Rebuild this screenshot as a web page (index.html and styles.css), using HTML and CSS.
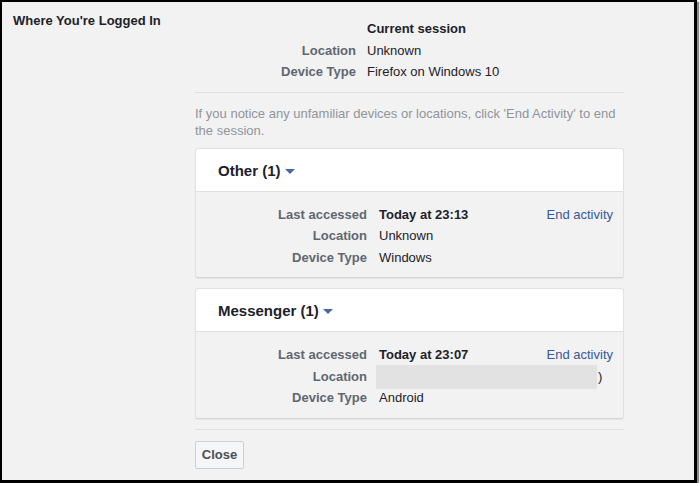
FILE: index.html
```html
<!DOCTYPE html>
<html lang="en">
<head>
<meta charset="utf-8">
<title>Where You're Logged In</title>
<link rel="stylesheet" href="styles.css">
</head>
<body>
<div class="frame">
  <div class="side">
    <h1 class="title">Where You're Logged In</h1>
  </div>
  <div class="main">
    <div class="current">
      <span class="lbl"></span><span class="val strong">Current session</span>
      <span class="lbl">Location</span><span class="val">Unknown</span>
      <span class="lbl">Device Type</span><span class="val">Firefox on Windows 10</span>
    </div>
    <div class="divider"></div>
    <p class="note">If you notice any unfamiliar devices or locations, click 'End Activity' to end the session.</p>

    <div class="card">
      <div class="card-head">
        <span class="card-title">Other (1)</span>
        <span class="caret"></span>
      </div>
      <div class="card-body">
        <span class="lbl">Last accessed</span><span class="val strong">Today at 23:13</span><a class="end" href="#">End activity</a>
        <span class="lbl">Location</span><span class="val">Unknown</span><span></span>
        <span class="lbl">Device Type</span><span class="val">Windows</span><span></span>
      </div>
    </div>

    <div class="card">
      <div class="card-head">
        <span class="card-title">Messenger (1)</span>
        <span class="caret"></span>
      </div>
      <div class="card-body">
        <span class="lbl">Last accessed</span><span class="val strong">Today at 23:07</span><a class="end" href="#">End activity</a>
        <span class="lbl">Location</span><span class="val blurred"><span class="blur"></span>)</span><span></span>
        <span class="lbl">Device Type</span><span class="val">Android</span><span></span>
      </div>
    </div>

    <div class="divider bottom"></div>
    <button class="close" type="button">Close</button>
  </div>
</div>
</body>
</html>
```

FILE: styles.css
```css
html, body {
  margin: 0;
  padding: 0;
  background: #ffffff;
}

.frame {
  box-sizing: border-box;
  width: 697px;
  height: 483px;
  border-style: solid;
  border-color: #000000;
  border-width: 2px 3px 3px 2px;
  background: #f2f2f2;
  box-shadow: 2px 2px 1px #8a8a8a;
  display: flex;
  font-family: "Liberation Sans", Arial, sans-serif;
  font-size: 13px;
  color: #1d2129;
}

.side {
  width: 193px;
  flex: none;
}

.title {
  margin: 0;
  padding: 11px 0 0 11px;
  font-size: 13px;
  line-height: 16px;
  font-weight: bold;
  color: #1d2129;
}

.main {
  width: 429px;
  flex: none;
  padding-top: 16px;
}

.current {
  display: grid;
  grid-template-columns: 161px 1fr;
  column-gap: 11px;
  line-height: 21.5px;
}

.lbl {
  text-align: right;
  font-weight: bold;
  color: #606770;
  white-space: nowrap;
}

.val {
  color: #1d2129;
  white-space: nowrap;
}

.strong {
  font-weight: bold;
}

.divider {
  height: 1px;
  background: #dddfe2;
  margin-top: 9px;
}

.note {
  margin: 12px 0 9px;
  line-height: 17px;
  color: #90949c;
}

.card {
  background: #f2f2f2;
  border: 1px solid #dfe1e4;
  border-bottom-color: #d3d5d8;
  border-radius: 3px;
  box-shadow: 0 1px 1px rgba(0, 0, 0, 0.05);
  margin-bottom: 10px;
}

.card-head {
  background: #ffffff;
  height: 42px;
  border-bottom: 1px solid #dddfe2;
  border-radius: 3px 3px 0 0;
  display: flex;
  align-items: center;
  padding-left: 22px;
}

.card-title {
  font-size: 15px;
  font-weight: bold;
  color: #1d2129;
  padding-top: 1px;
}

.caret {
  width: 0;
  height: 0;
  margin-left: 4px;
  margin-top: 3px;
  border-left: 5px solid transparent;
  border-right: 5px solid transparent;
  border-top: 5px solid #4b67a1;
}

.card-body {
  display: grid;
  grid-template-columns: 171px minmax(0, 1fr) auto;
  grid-auto-rows: 21.5px;
  column-gap: 12px;
  line-height: 21.5px;
  padding: 12px 10px 9px 0;
}

.end {
  justify-self: end;
  color: #365899;
  text-decoration: none;
  white-space: nowrap;
}

.blurred {
  display: flex;
  align-items: center;
  margin-left: -3px;
  height: 21.5px;
}

.blur {
  display: block;
  flex: none;
  width: 221px;
  height: 24px;
  margin: -1px 1px -1.5px 0;
  background: #e2e2e2;
}

.divider.bottom {
  margin-top: 1px;
}

.close {
  margin-top: 11px;
  height: 28px;
  width: 49px;
  padding: 0;
  border: 1px solid #ccd0d5;
  border-radius: 2px;
  background: #f5f6f7;
  font-family: "Liberation Sans", Arial, sans-serif;
  font-size: 13px;
  font-weight: bold;
  color: #4b4f56;
}
```
